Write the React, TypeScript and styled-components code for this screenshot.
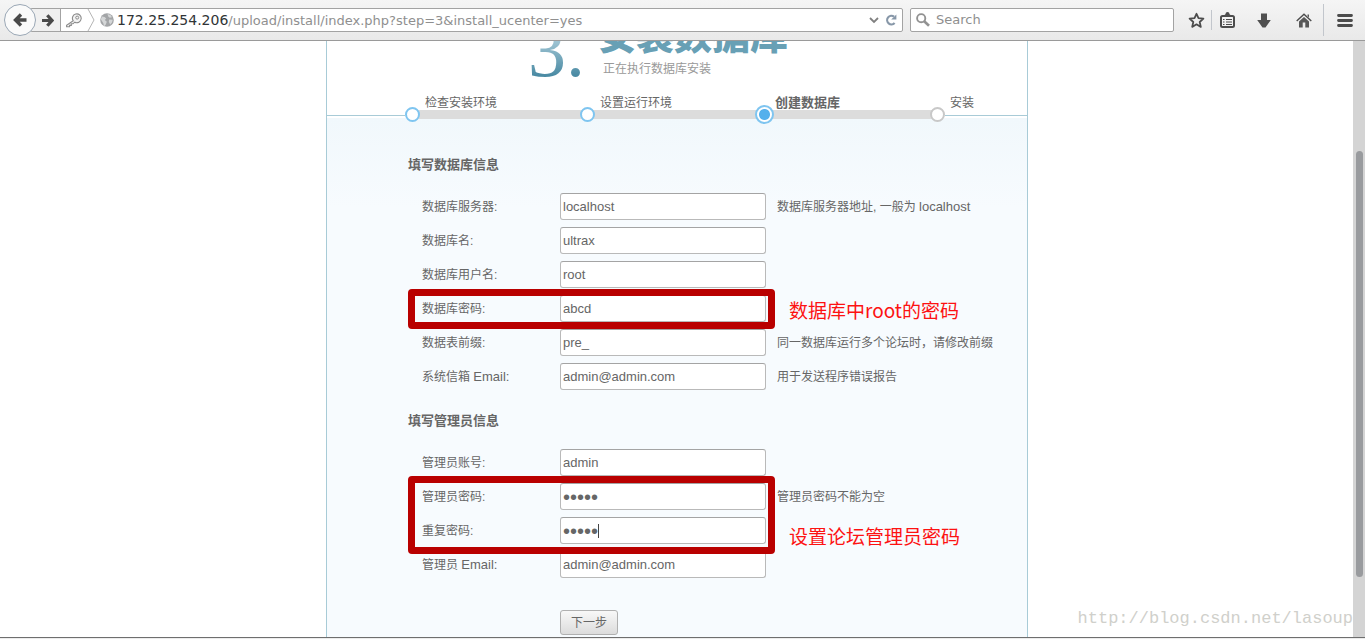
import React from "react";
import styled, { createGlobalStyle, css } from "styled-components";

const CJK = `"Liberation Sans", "Noto Sans CJK SC", sans-serif`;

const GlobalStyle = createGlobalStyle`
  *, *::before, *::after { box-sizing: border-box; }
  body { margin: 0; background: #fff; }
  button, input { font: inherit; color: inherit; }
`;

const Browser = styled.div`
  display: flex;
  flex-direction: column;
  height: 100vh;
  overflow: hidden;
  background: #ececec;
  color: #666;
  font: 12px/18px ${CJK};
`;

/* ---------- browser toolbar ---------- */

const Toolbar = styled.header`
  display: flex;
  align-items: center;
  flex: none;
  height: 41px;
  padding-left: 4px;
  border-bottom: 1px solid #9a9a9a;
  background: linear-gradient(#f5f5f5, #e9e9e9);
`;

const IconButton = styled.button<{ $width?: number }>`
  display: flex;
  align-items: center;
  justify-content: center;
  flex: none;
  width: ${(p) => p.$width ?? 16}px;
  height: 24px;
  padding: 0;
  border: 0;
  background: none;
  color: #4c4c4c;
`;

const BackButton = styled(IconButton)`
  position: relative;
  z-index: 1;
  width: 32px;
  height: 32px;
  border: 1px solid #9aa7b5;
  border-radius: 50%;
  background: #fafafa;
`;

const AddressBar = styled.form`
  display: flex;
  align-items: center;
  flex: 1;
  min-width: 0;
  height: 24px;
  margin-left: -6px;
  padding-right: 2px;
  border: 1px solid #a3a3a3;
  border-radius: 2px;
  background: #fff;
  color: #8f8f8f;
`;

const ForwardButton = styled(IconButton)`
  width: 30px;
  height: 22px;
  padding-left: 4px;
  border-right: 1px solid #a3a3a3;
  background: #f0f0f0;
`;

const Identity = styled.div`
  display: flex;
  align-items: center;
  gap: 5px;
  flex: none;
  width: 56px;
  padding-left: 4px;
`;

const Url = styled.a`
  flex: 1;
  min-width: 0;
  overflow: hidden;
  white-space: nowrap;
  color: #8f8f8f;
  text-decoration: none;
  font: 13px/20px "DejaVu Sans", sans-serif;
`;

const Host = styled.span`
  color: #303436;
  font-size: 14px;
`;

const SearchBar = styled.label`
  display: flex;
  align-items: center;
  gap: 6px;
  flex: none;
  width: 264px;
  height: 24px;
  margin: 0 7px;
  padding: 0 5px;
  border: 1px solid #a3a3a3;
  border-radius: 2px;
  background: #fff;
`;

const SearchInput = styled.input`
  flex: 1;
  min-width: 0;
  padding: 0;
  border: 0;
  outline: 0;
  background: none;
  font: 13px/20px "DejaVu Sans", sans-serif;
  &::placeholder { color: #8f8f8f; opacity: 1; }
`;

const Tools = styled.nav`
  display: flex;
  align-items: center;
  flex: none;
`;

const Separator = styled.span<{ $tall?: boolean }>`
  width: 1px;
  height: ${(p) => (p.$tall ? 32 : 20)}px;
  background: #c2c6cc;
`;

/* ---------- page ---------- */

const Viewport = styled.div`
  display: flex;
  flex: 1;
  min-height: 0;
  margin-bottom: 1px;
  border-bottom: 1px solid #6e6e6e;
  background: #fff;
`;

const Page = styled.main`
  position: relative;
  flex: 1;
  min-width: 0;
  padding-left: 1px;
  overflow: hidden;
`;

const ScrollTrack = styled.div`
  display: grid;
  grid-template-rows: 110fr 426fr 60fr;
  flex: none;
  width: 12px;
  padding: 0 2px 0 3px;
  background: #d4d4d4;
`;

const ScrollThumb = styled.div`
  grid-row: 2;
  border-radius: 4px;
  background: #999b9e;
`;

const Panel = styled.article`
  display: flex;
  flex-direction: column;
  width: 702px;
  min-height: 100%;
  margin: 0 auto;
  border: solid #a8cbd7;
  border-width: 0 1px;
  background: #fff;
`;

const Heading = styled.div`
  display: flex;
  align-items: flex-end;
  gap: 21px;
  height: 54px;
  padding: 0 0 18px 201px;
  overflow: hidden;
`;

const StepNumber = styled.span`
  width: 54px;
  flex: none;
  margin-bottom: -18px;
  background: linear-gradient(#b5d3df 30%, #4b8ba4 78%);
  background-clip: text;
  -webkit-background-clip: text;
  color: transparent;
  font: 76px/90px "Liberation Serif", serif;
`;

const Titles = styled.div`
  display: flex;
  flex-direction: column;
`;

const Title = styled.h1`
  margin: 0 0 8px -5px;
  color: #68a0b5;
  font: 900 38px/40px "Noto Sans CJK SC", sans-serif;
`;

const Subtitle = styled.p`
  margin: 0;
  color: #999;
  line-height: 16px;
`;

const Steps = styled.ol`
  position: relative;
  z-index: 1;
  display: flex;
  margin: 0;
  padding: 0;
  list-style: none;
`;

const Rule = styled.li<{ $grow?: boolean }>`
  flex: ${(p) => (p.$grow ? "1" : "0 0 78px")};
  height: 1px;
  margin-top: 20px;
  background: #a8cbd7;
`;

const Step = styled.li<{ $last?: boolean }>`
  flex: none;
  width: ${(p) => (p.$last ? 15 : 175)}px;
`;

const StepLabel = styled.span<{ $current?: boolean }>`
  display: block;
  margin-bottom: -6px;
  padding-left: 20px;
  line-height: 16px;
  white-space: nowrap;
  ${(p) => p.$current && css`font-weight: bold; font-size: 13px;`}
`;

const Track = styled.span`
  display: flex;
  align-items: center;
  height: 19px;
`;

const Marker = styled.span<{ $state: "done" | "current" | "todo" }>`
  z-index: 1;
  flex: none;
  width: 15px;
  height: 15px;
  border: 2px solid ${(p) => (p.$state === "todo" ? "#c8c8c8" : "#7fc5f0")};
  border-radius: 50%;
  background: #fff;
  ${(p) =>
    p.$state === "current" &&
    css`
      width: 19px;
      height: 19px;
      background: radial-gradient(circle, #55b0ec 5px, #fff 6px);
    `}
`;

const Connector = styled.span`
  flex: 1;
  height: 9px;
  margin: 0 -3px;
  background: #dcdcdc;
`;

const SetupForm = styled.form`
  flex: 1;
  margin-top: -6px;
  padding: 38px 0 2px 81px;
  background: linear-gradient(#f1f8fc, #f7fbfe 90px);
`;

const Group = styled.fieldset`
  position: relative;
  display: flex;
  flex-direction: column;
  gap: 7px;
  min-width: 0;
  margin: 0 0 22px;
  padding: 0;
  border: 0;
`;

const Legend = styled.legend`
  margin-bottom: 19px;
  padding: 0;
  font-weight: bold;
  font-size: 13px;
`;

const Row = styled.div`
  display: flex;
  align-items: center;
  height: 27px;
  padding-left: 14px;
  white-space: nowrap;
`;

const Label = styled.label`
  flex: none;
  width: 138px;
`;

const Field = styled.div`
  position: relative;
  display: flex;
  flex: none;
  width: 206px;
  margin-right: 11px;
`;

const TextInput = styled.input`
  width: 100%;
  height: 27px;
  padding: 0 2px;
  border: 1px solid #b9b9b9;
  border-top-color: #a4a4a4;
  border-radius: 3px;
  outline: 0;
  background: #fff;
  font-size: 13px;
  &[type="password"] {
    padding-top: 2px;
    font: 20px/22px "Liberation Sans", sans-serif;
  }
`;

const Caret = styled.span`
  position: absolute;
  top: 7px;
  left: 38px;
  width: 1px;
  height: 14px;
  background: #444;
`;

const Latin = styled.span`
  font-size: 13px;
`;

const NextButton = styled.button`
  display: block;
  width: 58px;
  height: 25px;
  margin: 32px 0 0 152px;
  padding: 0;
  border: 1px solid #b0b0b0;
  border-radius: 3px;
  background: linear-gradient(#f8f8f8, #dcdcdc);
`;

/* ---------- annotations laid over the page ---------- */

const Highlight = styled.div<{ $top: number; $height: number }>`
  position: absolute;
  z-index: 2;
  top: ${(p) => p.$top}px;
  left: 0;
  width: 367px;
  height: ${(p) => p.$height}px;
  border: 7px solid #b90000;
  border-radius: 4px;
  pointer-events: none;
`;

const Note = styled.div<{ $top: number }>`
  position: absolute;
  top: ${(p) => p.$top}px;
  left: 381px;
  color: #fd1212;
  font: 19px/28px "Noto Sans CJK SC", sans-serif;
  white-space: nowrap;
`;

const Watermark = styled.div`
  position: absolute;
  right: 0;
  bottom: 6px;
  color: #d0d0cb;
  font: 17px/24px "Liberation Mono", monospace;
`;

/* ---------- icons ---------- */

const Svg = ({ w, h, children }: { w: number; h: number; children: React.ReactNode }) => (
  <svg width={w} height={h} viewBox={`0 0 ${w} ${h}`} fill="none" aria-hidden="true">
    {children}
  </svg>
);

const ArrowLeft = () => (
  <Svg w={14} h={14}>
    <path d="M8 1.5 2.5 7 8 12.5M3 7h10.5" stroke="#4a4a4a" strokeWidth="3.4" />
  </Svg>
);
const ArrowRight = () => (
  <Svg w={12} h={13}>
    <path d="M5.3 1.2 10 6.5 5.3 11.8M0 6.5h9.5" stroke="#4a4a4a" strokeWidth="3.2" />
  </Svg>
);
const KeyIcon = () => (
  <Svg w={17} h={16}>
    <path
      d="M8.2 8.8 1.6 13.2v1.6h3v-1.4h1.7v-1.6H8l1.8-1.6a4.4 4.4 0 1 0-1.6-1.4Z"
      stroke="#8c8c8c"
      strokeWidth="1.1"
      fill="#f3f3f3"
    />
    <circle cx="12.2" cy="5.6" r="1.5" stroke="#8c8c8c" />
  </Svg>
);
const IdentityEdge = () => (
  <Svg w={8} h={22}>
    <path d="M1 0 7 11 1 22" stroke="#b4b4b4" />
  </Svg>
);
const Globe = () => (
  <Svg w={14} h={14}>
    <circle cx="7" cy="7" r="6.8" fill="#a3a5a7" />
    <path d="M.8 6.2 2 3.4 4.6 4l1.600 1.600L4.800 7l2 1.800-1 2.600-1.600 1.800-1-3.200Z" fill="#d4d6d7" />
    <path d="m7.500 1 3 .9 1.500 2.300-2.200.6-1.400-1ZM9.200 6.600l3.600.2-.8 2.800-1.800 1.800-1.400-2.600Z" fill="#d4d6d7" />
  </Svg>
);
const Chevron = () => (
  <Svg w={10} h={7}>
    <path d="m1 1 4 4 4-4" stroke="#808080" strokeWidth="1.8" />
  </Svg>
);
const Reload = () => (
  <Svg w={12} h={12}>
    <path d="M9 2.6A4.300 4.300 0 1 0 9.600 9" stroke="#8797a8" strokeWidth="2.2" />
    <path d="M11.400.4v5.200H6.200Z" fill="#8797a8" />
  </Svg>
);
const Magnifier = () => (
  <Svg w={14} h={14}>
    <circle cx="5.2" cy="5.2" r="4.1" stroke="#929292" strokeWidth="1.9" />
    <path d="m8.2 8.2 4.8 4.6" stroke="#929292" strokeWidth="2.6" />
  </Svg>
);
const Star = () => (
  <Svg w={17} h={17}>
    <path
      d="m8.5 1.800 2 4.400 4.900.5-3.700 3.300 1.100 4.900-4.300-2.600-4.300 2.600L5.300 10 1.600 6.700l4.900-.5Z"
      stroke="#4c4c4c"
      strokeWidth="1.8"
      strokeLinejoin="round"
    />
  </Svg>
);
const Clipboard = () => (
  <Svg w={15} h={16}>
    <rect x="1" y="4" width="13" height="11" rx="1.5" stroke="#4c4c4c" strokeWidth="2" fill="#f2f2f2" />
    <path d="M3 4.500C3.500 3 5.500 3 5.500 2a2 2 0 0 1 4 0c0 1 2 1 2.500 2.500Z" fill="#4c4c4c" />
    <path d="M3 7.500h1.500M6 7.500h6M3 10h1.500M6 10h6M3 12.500h1.500M6 12.500h6" stroke="#4c4c4c" strokeWidth="1.2" />
  </Svg>
);
const Download = () => (
  <Svg w={14} h={15}>
    <path d="M4 .5h6v6.500h3.800L8.500 14.500h-3L.2 7H4Z" fill="#505050" />
  </Svg>
);
const Home = () => (
  <Svg w={16} h={15}>
    <path d="M.7 8 8 1.200 15.300 8" stroke="#4c4c4c" strokeWidth="1.4" />
    <path d="M3 8.500 8 4l5 4.500v6H9.300v-5H6.700v5H3ZM11.500 1.500h1.500v3l-1.500-1.400Z" fill="#585858" />
  </Svg>
);
const Menu = () => (
  <Svg w={16} h={13}>
    <path d="M1.500 1.500h13M1.500 6.500h13M1.500 11.500h13" stroke="#4c4c4c" strokeWidth="2.8" strokeLinecap="round" />
  </Svg>
);

/* ---------- content ---------- */

type FieldSpec = {
  id: string;
  label: React.ReactNode;
  value: string;
  hint?: React.ReactNode;
  password?: boolean;
  caret?: boolean;
};

const database: FieldSpec[] = [
  { id: "dbhost", label: "数据库服务器:", value: "localhost", hint: <>数据库服务器地址, 一般为 <Latin>localhost</Latin></> },
  { id: "dbname", label: "数据库名:", value: "ultrax" },
  { id: "dbuser", label: "数据库用户名:", value: "root" },
  { id: "dbpw", label: "数据库密码:", value: "abcd" },
  { id: "tablepre", label: "数据表前缀:", value: "pre_", hint: "同一数据库运行多个论坛时，请修改前缀" },
  { id: "adminemail", label: <>系统信箱 <Latin>Email:</Latin></>, value: "admin@admin.com", hint: "用于发送程序错误报告" },
];

const admin: FieldSpec[] = [
  { id: "username", label: "管理员账号:", value: "admin" },
  { id: "password", label: "管理员密码:", value: "admin", hint: "管理员密码不能为空", password: true },
  { id: "password2", label: "重复密码:", value: "admin", password: true, caret: true },
  { id: "email", label: <>管理员 <Latin>Email:</Latin></>, value: "admin@admin.com" },
];

const FormRow = ({ spec }: { spec: FieldSpec }) => (
  <Row>
    <Label htmlFor={spec.id}>{spec.label}</Label>
    <Field>
      <TextInput id={spec.id} type={spec.password ? "password" : "text"} defaultValue={spec.value} />
      {spec.caret && <Caret />}
    </Field>
    {spec.hint && <span>{spec.hint}</span>}
  </Row>
);

const steps: { label: string; state: "done" | "current" | "todo" }[] = [
  { label: "检查安装环境", state: "done" },
  { label: "设置运行环境", state: "done" },
  { label: "创建数据库", state: "current" },
  { label: "安装", state: "todo" },
];

export default function App() {
  return (
    <Browser>
      <GlobalStyle />
      <Toolbar>
        <BackButton aria-label="Back"><ArrowLeft /></BackButton>
        <AddressBar>
          <ForwardButton type="button" aria-label="Forward"><ArrowRight /></ForwardButton>
          <Identity>
            <KeyIcon />
            <IdentityEdge />
            <Globe />
          </Identity>
          <Url href="#">
            <Host>172.25.254.206</Host>/upload/install/index.php?step=3&amp;install_ucenter=yes
          </Url>
          <IconButton type="button" aria-label="History"><Chevron /></IconButton>
          <IconButton type="button" aria-label="Reload" $width={18}><Reload /></IconButton>
        </AddressBar>
        <SearchBar>
          <Magnifier />
          <SearchInput type="text" placeholder="Search" aria-label="Search" />
        </SearchBar>
        <Tools>
          <IconButton aria-label="Bookmark" $width={30}><Star /></IconButton>
          <Separator />
          <IconButton aria-label="Bookmarks list" $width={31}><Clipboard /></IconButton>
          <IconButton aria-label="Downloads" $width={42}><Download /></IconButton>
          <IconButton aria-label="Home" $width={38}><Home /></IconButton>
          <Separator $tall />
          <IconButton aria-label="Menu" $width={41}><Menu /></IconButton>
        </Tools>
      </Toolbar>

      <Viewport>
        <Page>
          <Panel>
            <Heading>
              <StepNumber>3.</StepNumber>
              <Titles>
                <Title>安装数据库</Title>
                <Subtitle>正在执行数据库安装</Subtitle>
              </Titles>
            </Heading>

            <Steps>
              <Rule role="presentation" />
              {steps.map((s, i) => (
                <Step key={s.label} $last={i === steps.length - 1}>
                  <StepLabel $current={s.state === "current"}>{s.label}</StepLabel>
                  <Track>
                    <Marker $state={s.state} />
                    {i < steps.length - 1 && <Connector />}
                  </Track>
                </Step>
              ))}
              <Rule $grow role="presentation" />
            </Steps>

            <SetupForm>
              <Group>
                <Legend>填写数据库信息</Legend>
                {database.map((f) => <FormRow key={f.id} spec={f} />)}
                <Highlight $top={96} $height={40} />
                <Note $top={103}>数据库中root的密码</Note>
              </Group>
              <Group>
                <Legend>填写管理员信息</Legend>
                {admin.map((f) => <FormRow key={f.id} spec={f} />)}
                <Highlight $top={27} $height={78} />
                <Note $top={73}>设置论坛管理员密码</Note>
              </Group>
              <NextButton type="button">下一步</NextButton>
            </SetupForm>
          </Panel>
          <Watermark>http://blog.csdn.net/lasoup</Watermark>
        </Page>
        <ScrollTrack>
          <ScrollThumb />
        </ScrollTrack>
      </Viewport>
    </Browser>
  );
}
